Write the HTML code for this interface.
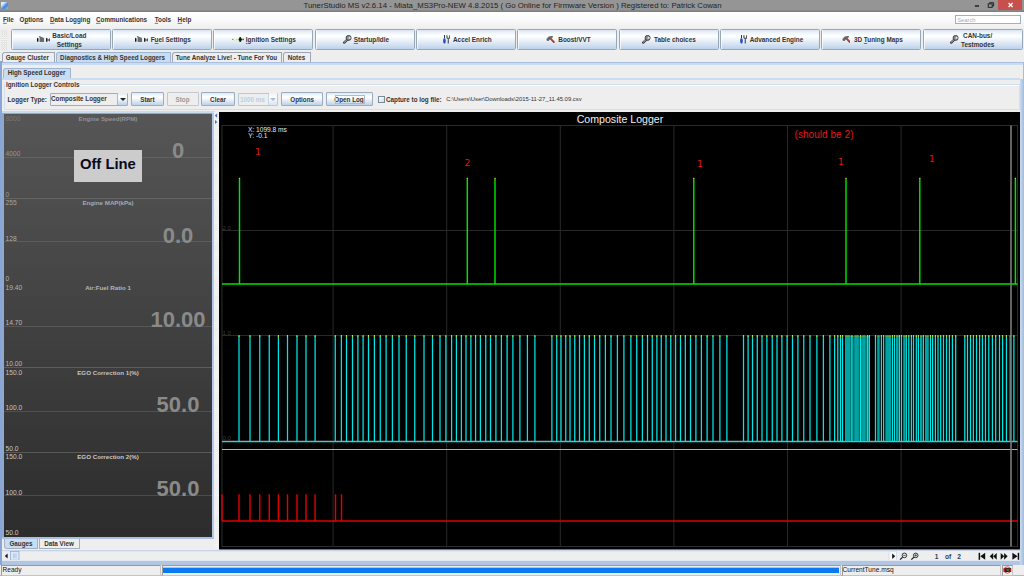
<!DOCTYPE html><html><head><meta charset="utf-8"><title>TunerStudio MS</title><style>
*{box-sizing:border-box;margin:0;padding:0}
html,body{width:1024px;height:576px;overflow:hidden;background:#eeeeee;font-family:"Liberation Sans",sans-serif;}
.a{position:absolute}
.t{position:absolute;white-space:nowrap;line-height:1;color:#333;font-weight:bold;font-size:6.4px;transform:translateY(-50%)}
.c{transform:translate(-50%,-50%)}
.btn{position:absolute;border:1px solid #9dacbf;border-radius:1px;background:linear-gradient(#dfe9f4 0%,#ffffff 32%,#f6f9fd 46%,#bdd2e9 100%);}
.tb{position:absolute;top:29px;height:21px;border:1px solid #97a7ba;border-radius:1.5px;background:linear-gradient(#d9e5f2 0%,#f0f5fb 16%,#ffffff 32%,#f2f7fc 46%,#bdd2e9 100%);box-shadow:inset 1px 0 0 rgba(255,255,255,0.7);}
.tab{position:absolute;border:1px solid #9aa6b4;border-bottom:none;border-radius:3px 0 0 0;background:#eeeeee}
.tab.sel{background:#c8ddf2;border-color:#9fb4cf}
u{text-decoration-thickness:0.6px;text-underline-offset:0.6px;text-decoration-color:rgba(40,40,40,0.6)}
</style></head><body>
<div class="a" style="left:0px;top:0px;width:1024px;height:12px;background:#959595;"></div>
<div class="a" style="left:0px;top:10.4px;width:1024px;height:1.8px;background:linear-gradient(#8c8c8c,#7c7c7c);"></div>
<div class="a" style="left:1.2px;top:2px;width:6.8px;height:7px;background:linear-gradient(135deg,#f4e8b0 0%,#dfeefc 25%,#3a86dc 60%,#9ab8d8 100%);"></div>
<div class="t c" style="left:512.5px;top:5.7px;font-size:7.78px;color:#242424;font-weight:normal;">TunerStudio MS v2.6.14 - Miata_MS3Pro-NEW 4.8.2015 ( Go Online for Firmware Version ) Registered to: Patrick Cowan</div>
<div class="a" style="left:998.4px;top:0px;width:23.7px;height:9.8px;background:#c7504c;"></div>
<svg class="a" style="left:970px;top:0" width="54" height="12" viewBox="970 0 54 12"><rect x="974.9" y="5.3" width="4.1" height="1.4" fill="#1a1a1a"/><rect x="988.2" y="3.9" width="4" height="3.4" fill="none" stroke="#1a1a1a" stroke-width="0.9"/><path d="M989.6 3.6 V2.7 H993.6 V6 H992.6" fill="none" stroke="#1a1a1a" stroke-width="0.9"/><path d="M1008.6 3 L1012.6 7 M1012.6 3 L1008.6 7" stroke="#fff" stroke-width="1.3"/></svg>
<div class="a" style="left:0px;top:12px;width:1024px;height:16px;background:linear-gradient(#ffffff 10%,#fafafa 50%,#efefef);"></div>
<div class="t" style="left:3px;top:20px;font-size:6.3px;color:#333;font-weight:bold;"><u>F</u>ile</div>
<div class="t" style="left:19.5px;top:20px;font-size:6.3px;color:#333;font-weight:bold;">O<u>p</u>tions</div>
<div class="t" style="left:50px;top:20px;font-size:6.3px;color:#333;font-weight:bold;"><u>D</u>ata Logging</div>
<div class="t" style="left:96px;top:20px;font-size:6.3px;color:#333;font-weight:bold;"><u>C</u>ommunications</div>
<div class="t" style="left:154.7px;top:20px;font-size:6.3px;color:#333;font-weight:bold;"><u>T</u>ools</div>
<div class="t" style="left:177.6px;top:20px;font-size:6.3px;color:#333;font-weight:bold;"><u>H</u>elp</div>
<div class="a" style="left:955.2px;top:15.2px;width:65.4px;height:9.3px;background:#ffffff;border:1px solid #9fb0c4"></div>
<div class="t" style="left:957.2px;top:20.7px;font-size:5.8px;color:#aaa;font-weight:normal;">Search</div>
<div class="a" style="left:0px;top:28px;width:1024px;height:24px;background:#eeeeee;"></div>
<div class="tb" style="left:10.5px;width:100.2px;display:flex;align-items:center;justify-content:center;gap:2.3px;padding:2px 0.0px 0 1.9px"><svg width="13.3" height="6.2" viewBox="0 0 13.3 6.2" style="margin-top:-2.6px"><ellipse cx="0.75" cy="3.9" rx="0.75" ry="2.1" fill="#000"/><polygon points="2.6,6 2.6,1.5 1.6,0.7 2.3,0 7.05,2.1 7.05,6" fill="#6c6c6c"/><ellipse cx="9.8" cy="3.9" rx="0.75" ry="2.1" fill="#000"/><polygon points="10.6,3.9 13.2,1.9 13.2,6" fill="#5a5a5a"/></svg><span style="font-size:6.4px;font-weight:bold;color:#333;text-align:center;line-height:8.6px;white-space:nowrap">Basic/Load<br>Settings</span></div>
<div class="tb" style="left:112.0px;width:100.2px;display:flex;align-items:center;justify-content:center;gap:2.3px;padding:2px 0.0px 0 1.7px"><svg width="13.3" height="6.2" viewBox="0 0 13.3 6.2" style="margin-top:-2.6px"><ellipse cx="0.75" cy="3.9" rx="0.75" ry="2.1" fill="#000"/><polygon points="2.6,6 2.6,1.5 1.6,0.7 2.3,0 7.05,2.1 7.05,6" fill="#6c6c6c"/><ellipse cx="9.8" cy="3.9" rx="0.75" ry="2.1" fill="#000"/><polygon points="10.6,3.9 13.2,1.9 13.2,6" fill="#5a5a5a"/></svg><span style="font-size:6.4px;font-weight:bold;color:#333;text-align:center;line-height:8.6px;white-space:nowrap">F<u>u</u>el Settings</span></div>
<div class="tb" style="left:213.3px;width:100.2px;display:flex;align-items:center;justify-content:center;gap:1.5px;padding:2px 0.0px 0 0.9px"><svg width="12.5" height="5" viewBox="0 0 12.5 5" style="margin-top:-2px"><circle cx="0.7" cy="2.4" r="0.6" fill="#a87010"/><path d="M2.6 1.2 L1.3 2.4 L2.6 3.6" stroke="#8ee88e" stroke-width="0.8" fill="none"/><circle cx="4.9" cy="2.5" r="0.9" fill="#e6e048"/><polygon points="6.6,2.5 7.8,0 8.7,0 9.2,1.5 10.2,2 10.2,3 9.2,3.5 8.7,5 7.8,5" fill="#0a1a0a" stroke="#0a6a0a" stroke-width="0.3"/><circle cx="11.3" cy="2.4" r="0.95" fill="#00a000"/></svg><span style="font-size:6.4px;font-weight:bold;color:#333;text-align:center;line-height:8.6px;white-space:nowrap"><u>I</u>gnition Settings</span></div>
<div class="tb" style="left:315.0px;width:100.2px;display:flex;align-items:center;justify-content:center;gap:2.3px;padding:2px 0.0px 0 1.3px"><svg width="9" height="8.6" viewBox="0 0 9 8.6" style="margin-top:-2px"><line x1="4.3" y1="4.6" x2="1.2" y2="7.6" stroke="#3c3c3c" stroke-width="2.3" stroke-linecap="round"/><line x1="3.9" y1="4.7" x2="1.2" y2="7.3" stroke="#f0f0f0" stroke-width="0.8"/><circle cx="5.6" cy="2.9" r="2.5" fill="#8a8a8a" stroke="#444" stroke-width="1"/><polygon points="5.2,2.2 8.8,-0.5 9,4.2 6.2,3.8" fill="#eef3f9" opacity="0.0"/><polygon points="5.3,3.2 6.6,1.6 7.6,2.6 7.2,4" fill="#f0f0f0"/></svg><span style="font-size:6.4px;font-weight:bold;color:#333;text-align:center;line-height:8.6px;white-space:nowrap"><u>S</u>tartup/Idle</span></div>
<div class="tb" style="left:416.0px;width:100.2px;display:flex;align-items:center;justify-content:center;gap:3px;padding:2px 0.0px 0 2.5px"><svg width="7" height="8.8" viewBox="0 0 7 8.8" style="margin-top:-2.4px"><rect x="1" y="0" width="0.9" height="3" fill="#222"/><ellipse cx="1.45" cy="5.8" rx="1.4" ry="2.9" fill="#2c50c4"/><path d="M3.9 0.2 V2 Q3.9 3.5 5.3 3.5 Q6.7 3.5 6.7 2 V0.2 M5.3 3.3 V8.5" stroke="#5c5c68" stroke-width="1.3" fill="none"/></svg><span style="font-size:6.4px;font-weight:bold;color:#333;text-align:center;line-height:8.6px;white-space:nowrap">Accel Enrich</span></div>
<div class="tb" style="left:517.2px;width:100.2px;display:flex;align-items:center;justify-content:center;gap:3.5px;padding:2px 0.0px 0 2.1px"><svg width="8.8" height="7" viewBox="0 0 8.8 7" style="margin-top:-3px"><line x1="4.6" y1="2.6" x2="7.9" y2="6.1" stroke="#b23c22" stroke-width="1.9" stroke-linecap="round"/><polygon points="0.4,3 2.8,0.6 6.6,-0.2 7.1,1.2 4.8,2.2 2.6,5 0.8,4.8" fill="#666"/></svg><span style="font-size:6.4px;font-weight:bold;color:#333;text-align:center;line-height:8.6px;white-space:nowrap">Boost/VVT</span></div>
<div class="tb" style="left:618.8px;width:100.2px;display:flex;align-items:center;justify-content:center;gap:2.5px;padding:2px 0.0px 0 0.5px"><svg width="9" height="8.6" viewBox="0 0 9 8.6" style="margin-top:-2px"><line x1="4.3" y1="4.6" x2="1.2" y2="7.6" stroke="#3c3c3c" stroke-width="2.3" stroke-linecap="round"/><line x1="3.9" y1="4.7" x2="1.2" y2="7.3" stroke="#f0f0f0" stroke-width="0.8"/><circle cx="5.6" cy="2.9" r="2.5" fill="#8a8a8a" stroke="#444" stroke-width="1"/><polygon points="5.2,2.2 8.8,-0.5 9,4.2 6.2,3.8" fill="#eef3f9" opacity="0.0"/><polygon points="5.3,3.2 6.6,1.6 7.6,2.6 7.2,4" fill="#f0f0f0"/></svg><span style="font-size:6.4px;font-weight:bold;color:#333;text-align:center;line-height:8.6px;white-space:nowrap">Table choices</span></div>
<div class="tb" style="left:720.1px;width:100.2px;display:flex;align-items:center;justify-content:center;gap:3px;padding:2px 0.0px 0 2.5px"><svg width="7" height="8.8" viewBox="0 0 7 8.8" style="margin-top:-2.4px"><rect x="1" y="0" width="0.9" height="3" fill="#222"/><ellipse cx="1.45" cy="5.8" rx="1.4" ry="2.9" fill="#2c50c4"/><path d="M3.9 0.2 V2 Q3.9 3.5 5.3 3.5 Q6.7 3.5 6.7 2 V0.2 M5.3 3.3 V8.5" stroke="#5c5c68" stroke-width="1.3" fill="none"/></svg><span style="font-size:6.4px;font-weight:bold;color:#333;text-align:center;line-height:8.6px;white-space:nowrap">Advanced Engine</span></div>
<div class="tb" style="left:821.3px;width:100.2px;display:flex;align-items:center;justify-content:center;gap:3.4px;padding:2px 0.0px 0 1.7px"><svg width="8.8" height="7" viewBox="0 0 8.8 7" style="margin-top:-3px"><line x1="4.6" y1="2.6" x2="7.9" y2="6.1" stroke="#b23c22" stroke-width="1.9" stroke-linecap="round"/><polygon points="0.4,3 2.8,0.6 6.6,-0.2 7.1,1.2 4.8,2.2 2.6,5 0.8,4.8" fill="#666"/></svg><span style="font-size:6.4px;font-weight:bold;color:#333;text-align:center;line-height:8.6px;white-space:nowrap">3D <u>T</u>uning Maps</span></div>
<div class="tb" style="left:922.8px;width:100.2px;display:flex;align-items:center;justify-content:center;gap:2px;padding:2px 1.5px 0 0.0px"><svg width="9" height="8.6" viewBox="0 0 9 8.6" style="margin-top:-2px"><line x1="4.3" y1="4.6" x2="1.2" y2="7.6" stroke="#3c3c3c" stroke-width="2.3" stroke-linecap="round"/><line x1="3.9" y1="4.7" x2="1.2" y2="7.3" stroke="#f0f0f0" stroke-width="0.8"/><circle cx="5.6" cy="2.9" r="2.5" fill="#8a8a8a" stroke="#444" stroke-width="1"/><polygon points="5.2,2.2 8.8,-0.5 9,4.2 6.2,3.8" fill="#eef3f9" opacity="0.0"/><polygon points="5.3,3.2 6.6,1.6 7.6,2.6 7.2,4" fill="#f0f0f0"/></svg><span style="font-size:6.4px;font-weight:bold;color:#333;text-align:center;line-height:8.6px;white-space:nowrap">CAN-bus/<br>Testmodes</span></div>
<div class="a" style="left:0.8px;top:29.5px;width:6.4px;height:20px;background:repeating-conic-gradient(#dadada 0% 25%, #f4f4f4 0% 50%) 0 0/2.13px 2.13px;"></div>
<div class="a" style="left:0px;top:61.5px;width:1024px;height:3.5px;background:#c8ddf2;"></div>
<div class="a" style="left:0px;top:61.8px;width:1022.5px;height:0.8px;background:#aabfe0;"></div>
<div class="a" style="left:0px;top:61px;width:2px;height:515px;background:#c8ddf2;"></div>
<div class="tab" style="left:2px;top:52px;width:53.2px;height:9.5px"></div>
<div class="t c" style="left:27.4px;top:57.5px;font-size:6.3px;color:#333;font-weight:bold;">Gauge Cluster</div>
<div class="tab sel" style="left:56px;top:52px;width:115.2px;height:9.5px"></div>
<div class="t c" style="left:112.6px;top:57.5px;font-size:6.3px;color:#333;font-weight:bold;">Diagnostics &amp; High Speed Loggers</div>
<div class="tab" style="left:171.5px;top:52px;width:110.4px;height:9.5px"></div>
<div class="t c" style="left:226.4px;top:57.5px;font-size:6.3px;color:#333;font-weight:bold;">Tune Analyze Live! - Tune For You</div>
<div class="tab" style="left:282.7px;top:52px;width:28.2px;height:9.5px"></div>
<div class="t c" style="left:296.4px;top:57.5px;font-size:6.3px;color:#333;font-weight:bold;">Notes</div>
<div class="tab sel" style="left:2.5px;top:67.5px;width:68px;height:11px"></div>
<div class="t c" style="left:36.5px;top:73px;font-size:6.3px;color:#333;font-weight:bold;">High Speed Logger</div>
<div class="a" style="left:2px;top:78px;width:1018px;height:2px;background:#c8ddf2;"></div>
<div class="a" style="left:4px;top:84px;width:1016px;height:1px;background:#d2dfee;"></div>
<div class="a" style="left:5px;top:85px;width:1014px;height:1px;background:#fafcfe;"></div>
<div class="a" style="left:5px;top:81px;width:74px;height:6.4px;background:#eeeeee;"></div>
<div class="t" style="left:6px;top:84.5px;font-size:6.3px;color:#333;font-weight:bold;">Ignition Logger Controls</div>
<div class="a" style="left:4px;top:84px;width:1px;height:26px;background:#d2dfee;"></div>
<div class="a" style="left:1019px;top:84px;width:1px;height:26px;background:#d2dfee;"></div>
<div class="a" style="left:4px;top:109px;width:1016px;height:1px;background:#d2dfee;"></div>
<div class="t" style="left:7.5px;top:99.5px;font-size:6.3px;color:#333;font-weight:bold;">Logger Type:</div>
<div class="btn" style="left:49.5px;top:92.5px;width:78px;height:13px;background:#eeeeee"></div>
<div class="a" style="left:117.5px;top:93.3px;width:9.3px;height:11.4px;background:linear-gradient(#dfe9f4 0%,#ffffff 32%,#f6f9fd 46%,#bdd2e9 100%)"></div>
<div class="t" style="left:51px;top:99px;font-size:6.3px;color:#333;font-weight:bold;">Composite Logger</div>
<div class="a" style="left:117px;top:93.3px;width:0.8px;height:11.5px;background:#a9b8ca"></div>
<div class="a" style="left:119.6px;top:98.2px;width:0;height:0;border-left:3px solid transparent;border-right:3px solid transparent;border-top:3.2px solid #222"></div>
<div class="btn" style="left:131px;top:92.4px;width:33px;height:13.3px"></div>
<div class="t c" style="left:147.5px;top:99.5px;font-size:6.3px;color:#333;font-weight:bold;">Start</div>
<div class="btn" style="left:166.5px;top:92.4px;width:32px;height:13.3px;background:#eeeeee;border-color:#c2c8d0"></div>
<div class="t c" style="left:182.5px;top:99.5px;font-size:6.3px;color:#999;font-weight:bold;">Stop</div>
<div class="btn" style="left:201px;top:92.4px;width:34px;height:13.3px"></div>
<div class="t c" style="left:218.0px;top:99.5px;font-size:6.3px;color:#333;font-weight:bold;">Clear</div>
<div class="btn" style="left:238.3px;top:92.5px;width:39.5px;height:13px;border-color:#bcc8d6;background:#eeeeee"></div>
<div class="a" style="left:268.5px;top:93.3px;width:8.5px;height:11.4px;background:linear-gradient(#eaf1f8 0%,#ffffff 35%,#d6e4f3 100%)"></div>
<div class="t" style="left:240px;top:99.5px;font-size:6.3px;color:#b8cfe5;font-weight:bold;">1000 ms</div>
<div class="a" style="left:268px;top:93.5px;width:1px;height:11.5px;background:#c8d5e2"></div>
<div class="a" style="left:270.4px;top:98.2px;width:0;height:0;border-left:3px solid transparent;border-right:3px solid transparent;border-top:3.2px solid #a8bcd4"></div>
<div class="btn" style="left:281.3px;top:92.4px;width:41.7px;height:13.3px"></div>
<div class="t c" style="left:302.15000000000003px;top:99.5px;font-size:6.3px;color:#333;font-weight:bold;">Options</div>
<div class="btn" style="left:325.5px;top:92.4px;width:47px;height:13.3px"></div>
<div class="t c" style="left:349.0px;top:99.5px;font-size:6.3px;color:#333;font-weight:bold;">Open <u>L</u>og</div>
<div class="a" style="left:334.5px;top:94.6px;width:30px;height:9.4px;background:transparent;border:0.8px solid #aebcd2"></div>
<div class="a" style="left:377.5px;top:96px;width:7px;height:7px;border:1px solid #7a8a99;background:linear-gradient(135deg,#fff,#c8ddf2)"></div>
<div class="t" style="left:386px;top:99.5px;font-size:6.3px;color:#333;font-weight:bold;">Capture to log file:</div>
<div class="t" style="left:446.3px;top:100px;font-size:5.9px;color:#333;font-weight:normal;">C:\Users\User\Downloads\2015-11-27_11.45.09.csv</div>
<div class="a" style="left:2px;top:111px;width:213px;height:2px;background:#c8ddf2;"></div>
<div class="a" style="left:2px;top:112.5px;width:212.5px;height:1.7px;background:#8fa8cc;"></div>
<div class="a" style="left:2.2px;top:112.5px;width:1.8px;height:426px;background:#8fa8cc;"></div>
<div class="a" style="left:4px;top:114.25px;width:208px;height:423px;background:linear-gradient(#565656,#2c2c2c);"></div>
<div class="a" style="left:211.7px;top:113px;width:2.2px;height:425.5px;background:#b4c8e8;"></div>
<div class="a" style="left:2.2px;top:537.1px;width:211.7px;height:1.6px;background:#a9c0e4;"></div>
<div class="a" style="left:4px;top:156.85px;width:208px;height:1px;background:rgba(140,140,140,0.3);"></div>
<div class="t" style="left:5.5px;top:118.85px;font-size:6.7px;color:#787878;font-weight:normal;">8000</div>
<div class="t" style="left:5.5px;top:154.15px;font-size:6.7px;color:#969696;font-weight:normal;">4000</div>
<div class="t" style="left:5.5px;top:194.85px;font-size:6.7px;color:#969696;font-weight:normal;">0</div>
<div class="t c" style="left:108px;top:118.75px;font-size:6.2px;color:#929292;font-weight:bold;">Engine Speed(RPM)</div>
<div class="t c" style="left:178px;top:151.05px;font-size:22px;color:#8a8a8a;font-weight:bold;">0</div>
<div class="a" style="left:4px;top:198.35px;width:208px;height:1px;background:rgba(120,120,120,0.55);"></div>
<div class="a" style="left:4px;top:241.45px;width:208px;height:1px;background:rgba(140,140,140,0.3);"></div>
<div class="t" style="left:5.5px;top:203.45px;font-size:6.7px;color:#a4a4a4;font-weight:normal;">255</div>
<div class="t" style="left:5.5px;top:238.75px;font-size:6.7px;color:#aeaeae;font-weight:normal;">128</div>
<div class="t" style="left:5.5px;top:279.45px;font-size:6.7px;color:#aeaeae;font-weight:normal;">0</div>
<div class="t c" style="left:108px;top:203.35px;font-size:6.2px;color:#aaaaaa;font-weight:bold;">Engine MAP(kPa)</div>
<div class="t c" style="left:178px;top:235.64999999999998px;font-size:22px;color:#8a8a8a;font-weight:bold;">0.0</div>
<div class="a" style="left:4px;top:326.05px;width:208px;height:1px;background:rgba(140,140,140,0.3);"></div>
<div class="t" style="left:5.5px;top:288.05px;font-size:6.7px;color:#b2b2b2;font-weight:normal;">19.40</div>
<div class="t" style="left:5.5px;top:323.34999999999997px;font-size:6.7px;color:#bababa;font-weight:normal;">14.70</div>
<div class="t" style="left:5.5px;top:364.04999999999995px;font-size:6.7px;color:#bababa;font-weight:normal;">10.00</div>
<div class="t c" style="left:108px;top:287.95px;font-size:6.2px;color:#b6b6b6;font-weight:bold;">Air:Fuel Ratio 1</div>
<div class="t c" style="left:178px;top:320.25px;font-size:22px;color:#8a8a8a;font-weight:bold;">10.00</div>
<div class="a" style="left:4px;top:367.04999999999995px;width:208px;height:1px;background:rgba(120,120,120,0.55);"></div>
<div class="a" style="left:4px;top:410.65px;width:208px;height:1px;background:rgba(140,140,140,0.3);"></div>
<div class="t" style="left:5.5px;top:372.65px;font-size:6.7px;color:#c2c2c2;font-weight:normal;">150.0</div>
<div class="t" style="left:5.5px;top:407.94999999999993px;font-size:6.7px;color:#c6c6c6;font-weight:normal;">100.0</div>
<div class="t" style="left:5.5px;top:448.65px;font-size:6.7px;color:#c6c6c6;font-weight:normal;">50.0</div>
<div class="t c" style="left:108px;top:372.54999999999995px;font-size:6.2px;color:#c4c4c4;font-weight:bold;">EGO Correction 1(%)</div>
<div class="t c" style="left:178px;top:404.84999999999997px;font-size:22px;color:#8a8a8a;font-weight:bold;">50.0</div>
<div class="a" style="left:4px;top:452.15px;width:208px;height:1px;background:rgba(120,120,120,0.55);"></div>
<div class="a" style="left:4px;top:495.25px;width:208px;height:1px;background:rgba(140,140,140,0.3);"></div>
<div class="t" style="left:5.5px;top:457.25px;font-size:6.7px;color:#c6c6c6;font-weight:normal;">150.0</div>
<div class="t" style="left:5.5px;top:492.54999999999995px;font-size:6.7px;color:#cacaca;font-weight:normal;">100.0</div>
<div class="t" style="left:5.5px;top:533.25px;font-size:6.7px;color:#cacaca;font-weight:normal;">50.0</div>
<div class="t c" style="left:108px;top:457.15px;font-size:6.2px;color:#c8c8c8;font-weight:bold;">EGO Correction 2(%)</div>
<div class="t c" style="left:178px;top:489.45px;font-size:22px;color:#8a8a8a;font-weight:bold;">50.0</div>
<div class="a" style="left:74px;top:149.5px;width:67.5px;height:32.5px;background:#cccccc;"></div>
<div class="t c" style="left:107.9px;top:164.2px;font-size:14.8px;color:#0a0a20;font-weight:bold;">Off Line</div>
<div class="a" style="left:4px;top:538.5px;width:34px;height:10px;background:#c8ddf2;border:1px solid #a4b0be;border-top:none;border-radius:0 0 0 3px"></div>
<div class="t c" style="left:21px;top:543.7px;font-size:6.3px;color:#333;font-weight:bold;">Gauges</div>
<div class="a" style="left:38.5px;top:538.5px;width:41px;height:10px;background:#eeeeee;border:1px solid #a4b0be;border-top:none;"></div>
<div class="t c" style="left:59px;top:543.7px;font-size:6.3px;color:#333;font-weight:bold;">Data View</div>
<div class="a" style="left:214px;top:111.5px;width:5px;height:438px;background:repeating-conic-gradient(#e8e8e8 0% 25%, #f6f6f6 0% 50%) 0 0/2.13px 2.13px;"></div>
<svg class="a" style="left:213px;top:112px" width="7" height="14" viewBox="213 112 7 14"><polygon points="214.8,115.6 217.1,113.5 217.1,117.7" fill="#4a6ec0"/><polygon points="217.3,122 215,119.9 215,124.1" fill="#4a6ec0"/></svg>
<svg class="a" style="left:0;top:0" width="1024" height="576" viewBox="0 0 1024 576" font-family="Liberation Sans, sans-serif">
<rect x="219" y="112" width="801" height="437.5" fill="#000"/>
<line x1="333.10" y1="125.5" x2="333.10" y2="546.5" stroke="#292929" stroke-width="1"/>
<line x1="446.70" y1="125.5" x2="446.70" y2="546.5" stroke="#292929" stroke-width="1"/>
<line x1="560.30" y1="125.5" x2="560.30" y2="546.5" stroke="#292929" stroke-width="1"/>
<line x1="673.90" y1="125.5" x2="673.90" y2="546.5" stroke="#292929" stroke-width="1"/>
<line x1="787.50" y1="125.5" x2="787.50" y2="546.5" stroke="#292929" stroke-width="1"/>
<line x1="901.10" y1="125.5" x2="901.10" y2="546.5" stroke="#292929" stroke-width="1"/>
<line x1="222" y1="230.50" x2="1017.5" y2="230.50" stroke="#292929" stroke-width="1"/>
<line x1="222" y1="335.50" x2="1017.5" y2="335.50" stroke="#292929" stroke-width="1"/>
<line x1="222" y1="440.50" x2="1017.5" y2="440.50" stroke="#292929" stroke-width="1"/>
<rect x="222" y="125.5" width="795.5" height="421.0" fill="none" stroke="#2c2c2c" stroke-width="1"/>
<text x="620" y="123" fill="#f0f0f0" font-size="10.6" text-anchor="middle">Composite Logger</text>
<text x="248" y="131.9" fill="#e8e8e8" font-size="6.6">X: 1099.8 ms</text>
<text x="248.3" y="138.1" fill="#e8e8e8" font-size="6.6">Y: -0.1</text>
<text x="222.5" y="229.5" fill="#3a3a3a" font-size="6">2.0</text>
<text x="222.5" y="334.5" fill="#3a3a3a" font-size="6">1.0</text>
<text x="222.5" y="440" fill="#3a3a3a" font-size="6">0.0</text>
<path d="M222 283.9 H1017.5 M239.5 283.9 V178.5 M467.3 283.9 V178.5 M495 283.9 V178.5 M693.8 283.9 V178.5 M846 283.9 V178.5 M919.8 283.9 V178.5 M1015.4 283.9 V178.5" stroke="#00e400" stroke-width="1.45" fill="none"/>
<rect x="238.9" y="177.8" width="1.2" height="1.2" fill="#e8d000"/>
<rect x="466.7" y="177.8" width="1.2" height="1.2" fill="#e8d000"/>
<rect x="494.4" y="177.8" width="1.2" height="1.2" fill="#e8d000"/>
<rect x="693.1999999999999" y="177.8" width="1.2" height="1.2" fill="#e8d000"/>
<rect x="845.4" y="177.8" width="1.2" height="1.2" fill="#e8d000"/>
<rect x="919.1999999999999" y="177.8" width="1.2" height="1.2" fill="#e8d000"/>
<rect x="1014.8" y="177.8" width="1.2" height="1.2" fill="#e8d000"/>
<rect x="845" y="336" width="24.8" height="105.5" fill="#006a6a"/>
<rect x="845" y="336" width="5.30" height="105.5" fill="#00a2a2"/>
<rect x="845" y="335.3" width="5.30" height="1.2" fill="#b0a000"/>
<rect x="854.4" y="336" width="4.35" height="105.5" fill="#00a2a2"/>
<rect x="854.4" y="335.3" width="4.35" height="1.2" fill="#b0a000"/>
<rect x="862.2" y="336" width="3.40" height="105.5" fill="#00a2a2"/>
<rect x="862.2" y="335.3" width="3.40" height="1.2" fill="#b0a000"/>
<rect x="877.2" y="336" width="2.50" height="105.5" fill="#00a2a2"/>
<rect x="877.2" y="335.3" width="2.50" height="1.2" fill="#b0a000"/>
<rect x="885.3" y="336" width="5.70" height="105.5" fill="#00a2a2"/>
<rect x="885.3" y="335.3" width="5.70" height="1.2" fill="#b0a000"/>
<rect x="896" y="336" width="2.50" height="105.5" fill="#00a2a2"/>
<rect x="896" y="335.3" width="2.50" height="1.2" fill="#b0a000"/>
<rect x="903.2" y="336" width="2.20" height="105.5" fill="#00a2a2"/>
<rect x="903.2" y="335.3" width="2.20" height="1.2" fill="#b0a000"/>
<rect x="920" y="336" width="2.25" height="105.5" fill="#00a2a2"/>
<rect x="920" y="335.3" width="2.25" height="1.2" fill="#b0a000"/>
<rect x="925" y="336" width="3.80" height="105.5" fill="#00a2a2"/>
<rect x="925" y="335.3" width="3.80" height="1.2" fill="#b0a000"/>
<path d="M222 441.5 H1017.5 M239 441.5 V336 M250 441.5 V336 M259.75 441.5 V336 M269.25 441.5 V336 M278.4 441.5 V336 M287.5 441.5 V336 M297 441.5 V336 M306 441.5 V336 M315.1 441.5 V336 M335.25 441.5 V336 M341.4 441.5 V336 M346.5 441.5 V336 M352.5 441.5 V336 M357.9 441.5 V336 M363.1 441.5 V336 M368.5 441.5 V336 M374.4 441.5 V336 M380.25 441.5 V336 M386.1 441.5 V336 M392.4 441.5 V336 M399 441.5 V336 M406.25 441.5 V336 M414.75 441.5 V336 M424 441.5 V336 M432.5 441.5 V336 M440 441.5 V336 M445.9 441.5 V336 M451.6 441.5 V336 M456.4 441.5 V336 M461.4 441.5 V336 M466 441.5 V336 M470.9 441.5 V336 M475.6 441.5 V336 M480.4 441.5 V336 M485.75 441.5 V336 M490.5 441.5 V336 M495.9 441.5 V336 M501.4 441.5 V336 M507.1 441.5 V336 M512.9 441.5 V336 M519.9 441.5 V336 M527.4 441.5 V336 M534.9 441.5 V336 M551.9 441.5 V336 M556.75 441.5 V336 M561 441.5 V336 M565.75 441.5 V336 M570 441.5 V336 M574.75 441.5 V336 M579.5 441.5 V336 M584.4 441.5 V336 M589.25 441.5 V336 M594.5 441.5 V336 M599.75 441.5 V336 M605.4 441.5 V336 M611 441.5 V336 M617.4 441.5 V336 M623.9 441.5 V336 M630.9 441.5 V336 M636.75 441.5 V336 M642.4 441.5 V336 M647.5 441.5 V336 M652.25 441.5 V336 M656.9 441.5 V336 M661.25 441.5 V336 M666 441.5 V336 M670.75 441.5 V336 M675.6 441.5 V336 M680.5 441.5 V336 M685.35 441.5 V336 M690.5 441.5 V336 M695.9 441.5 V336 M701.4 441.5 V336 M707.1 441.5 V336 M713 441.5 V336 M719.9 441.5 V336 M726.9 441.5 V336 M743.5 441.5 V336 M748.1 441.5 V336 M752.5 441.5 V336 M757.25 441.5 V336 M762 441.5 V336 M766.9 441.5 V336 M772.25 441.5 V336 M777 441.5 V336 M781.9 441.5 V336 M787.1 441.5 V336 M792.5 441.5 V336 M797.9 441.5 V336 M803.75 441.5 V336 M810 441.5 V336 M816.9 441.5 V336 M823.4 441.5 V336 M829.9 441.5 V336 M834.6 441.5 V336 M837.8 441.5 V336 M840.5 441.5 V336 M842.5 441.5 V336 M851.9 441.5 V336 M860.6 441.5 V336 M867.5 441.5 V336 M869.4 441.5 V336 M875.5 441.5 V336 M881.4 441.5 V336 M883.6 441.5 V336 M892.4 441.5 V336 M894.5 441.5 V336 M899.4 441.5 V336 M901.5 441.5 V336 M906.3 441.5 V336 M908.8 441.5 V336 M911.4 441.5 V336 M913.5 441.5 V336 M916.3 441.5 V336 M918.4 441.5 V336 M923.4 441.5 V336 M930.5 441.5 V336 M932.6 441.5 V336 M935.4 441.5 V336 M938 441.5 V336 M940.7 441.5 V336 M943.5 441.5 V336 M946.5 441.5 V336 M949.4 441.5 V336 M952.4 441.5 V336 M955.7 441.5 V336 M964.8 441.5 V336 M967.5 441.5 V336 M970.5 441.5 V336 M973.4 441.5 V336 M976.5 441.5 V336 M979.6 441.5 V336 M982.4 441.5 V336 M985.5 441.5 V336 M988.8 441.5 V336 M992.4 441.5 V336 M995.7 441.5 V336 M999.5 441.5 V336 M1002.6 441.5 V336 M1006.4 441.5 V336 M1010.2 441.5 V336 M1013.9 441.5 V336" stroke="#00e6e6" stroke-width="1.25" fill="none"/>
<path d="M238.45 335.9h1.1M249.45 335.9h1.1M259.2 335.9h1.1M268.7 335.9h1.1M277.84999999999997 335.9h1.1M286.95 335.9h1.1M296.45 335.9h1.1M305.45 335.9h1.1M314.55 335.9h1.1M334.7 335.9h1.1M340.84999999999997 335.9h1.1M345.95 335.9h1.1M351.95 335.9h1.1M357.34999999999997 335.9h1.1M362.55 335.9h1.1M367.95 335.9h1.1M373.84999999999997 335.9h1.1M379.7 335.9h1.1M385.55 335.9h1.1M391.84999999999997 335.9h1.1M398.45 335.9h1.1M405.7 335.9h1.1M414.2 335.9h1.1M423.45 335.9h1.1M431.95 335.9h1.1M439.45 335.9h1.1M445.34999999999997 335.9h1.1M451.05 335.9h1.1M455.84999999999997 335.9h1.1M460.84999999999997 335.9h1.1M465.45 335.9h1.1M470.34999999999997 335.9h1.1M475.05 335.9h1.1M479.84999999999997 335.9h1.1M485.2 335.9h1.1M489.95 335.9h1.1M495.34999999999997 335.9h1.1M500.84999999999997 335.9h1.1M506.55 335.9h1.1M512.35 335.9h1.1M519.35 335.9h1.1M526.85 335.9h1.1M534.35 335.9h1.1M551.35 335.9h1.1M556.2 335.9h1.1M560.45 335.9h1.1M565.2 335.9h1.1M569.45 335.9h1.1M574.2 335.9h1.1M578.95 335.9h1.1M583.85 335.9h1.1M588.7 335.9h1.1M593.95 335.9h1.1M599.2 335.9h1.1M604.85 335.9h1.1M610.45 335.9h1.1M616.85 335.9h1.1M623.35 335.9h1.1M630.35 335.9h1.1M636.2 335.9h1.1M641.85 335.9h1.1M646.95 335.9h1.1M651.7 335.9h1.1M656.35 335.9h1.1M660.7 335.9h1.1M665.45 335.9h1.1M670.2 335.9h1.1M675.0500000000001 335.9h1.1M679.95 335.9h1.1M684.8000000000001 335.9h1.1M689.95 335.9h1.1M695.35 335.9h1.1M700.85 335.9h1.1M706.5500000000001 335.9h1.1M712.45 335.9h1.1M719.35 335.9h1.1M726.35 335.9h1.1M742.95 335.9h1.1M747.5500000000001 335.9h1.1M751.95 335.9h1.1M756.7 335.9h1.1M761.45 335.9h1.1M766.35 335.9h1.1M771.7 335.9h1.1M776.45 335.9h1.1M781.35 335.9h1.1M786.5500000000001 335.9h1.1M791.95 335.9h1.1M797.35 335.9h1.1M803.2 335.9h1.1M809.45 335.9h1.1M816.35 335.9h1.1M822.85 335.9h1.1M829.35 335.9h1.1M834.0500000000001 335.9h1.1M837.25 335.9h1.1M839.95 335.9h1.1M841.95 335.9h1.1M851.35 335.9h1.1M860.0500000000001 335.9h1.1M866.95 335.9h1.1M868.85 335.9h1.1M874.95 335.9h1.1M880.85 335.9h1.1M883.0500000000001 335.9h1.1M891.85 335.9h1.1M893.95 335.9h1.1M898.85 335.9h1.1M900.95 335.9h1.1M905.75 335.9h1.1M908.25 335.9h1.1M910.85 335.9h1.1M912.95 335.9h1.1M915.75 335.9h1.1M917.85 335.9h1.1M922.85 335.9h1.1M929.95 335.9h1.1M932.0500000000001 335.9h1.1M934.85 335.9h1.1M937.45 335.9h1.1M940.1500000000001 335.9h1.1M942.95 335.9h1.1M945.95 335.9h1.1M948.85 335.9h1.1M951.85 335.9h1.1M955.1500000000001 335.9h1.1M964.25 335.9h1.1M966.95 335.9h1.1M969.95 335.9h1.1M972.85 335.9h1.1M975.95 335.9h1.1M979.0500000000001 335.9h1.1M981.85 335.9h1.1M984.95 335.9h1.1M988.25 335.9h1.1M991.85 335.9h1.1M995.1500000000001 335.9h1.1M998.95 335.9h1.1M1002.0500000000001 335.9h1.1M1005.85 335.9h1.1M1009.6500000000001 335.9h1.1M1013.35 335.9h1.1" stroke="#f0dc00" stroke-width="1.6" fill="none"/>
<line x1="222" y1="449.5" x2="1017.5" y2="449.5" stroke="#b0b0b0" stroke-width="1"/>
<path d="M222 521 H1017.5 M222 521 V494.3 M239 521 V494.3 M250 521 V494.3 M259.75 521 V494.3 M269.25 521 V494.3 M278.4 521 V494.3 M287.5 521 V494.3 M297 521 V494.3 M306 521 V494.3 M315.1 521 V494.3 M335.5 521 V494.3 M341.5 521 V494.3" stroke="#e00000" stroke-width="1.45" fill="none"/>
<rect x="1010.2" y="125.5" width="1.6" height="421.0" fill="#7a7a7a"/>
<text x="255" y="154.5" fill="#e01818" font-size="9.2" font-family="DejaVu Sans, sans-serif">1</text>
<text x="464.5" y="166" fill="#e01818" font-size="9.2" font-family="DejaVu Sans, sans-serif">2</text>
<text x="697" y="166.5" fill="#e01818" font-size="9.2" font-family="DejaVu Sans, sans-serif">1</text>
<text x="838" y="165.3" fill="#e01818" font-size="9.2" font-family="DejaVu Sans, sans-serif">1</text>
<text x="929" y="162" fill="#e01818" font-size="9.2" font-family="DejaVu Sans, sans-serif">1</text>
<text x="794.6" y="137.8" fill="#e01818" font-size="10.1">(should be 2)</text>
</svg>
<div class="a" style="left:2px;top:549.6px;width:1018.5px;height:1.5px;background:#c6d5e8;"></div>
<div class="a" style="left:3.5px;top:551px;width:885.5px;height:9.6px;background:#eeeeee;border:1px solid #dfe6ee;border-left:none;border-right:none"></div>
<svg class="a" style="left:0;top:548px" width="1024" height="28" viewBox="0 548 1024 28" font-family="Liberation Sans, sans-serif"><polygon points="4.8,556 7.6,553.4 7.6,558.6" fill="#111"/><rect x="10.5" y="551.4" width="8.5" height="8.8" fill="#dce8f5" stroke="#8fb0dc" stroke-width="0.8"/><path d="M13.5 553.5 V558.2 M14.8 553.5 V558.2 M16.1 553.5 V558.2" stroke="#9db8dc" stroke-width="0.6"/><rect x="889" y="551.2" width="7.5" height="9.2" fill="#f4f7fb" stroke="#c5d2e0" stroke-width="0.6"/><polygon points="895.2,556.3 892.2,553.6 892.2,559" fill="#111"/><circle cx="904.4" cy="555.4" r="2.3" fill="#eee" stroke="#222" stroke-width="0.9"/><line x1="902.6" y1="557.3" x2="900" y2="559.6" stroke="#222" stroke-width="1.2"/><line x1="903.2" y1="555.4" x2="905.6" y2="555.4" stroke="#222" stroke-width="0.7"/><circle cx="915.7" cy="555.4" r="2.3" fill="#eee" stroke="#222" stroke-width="0.9"/><line x1="913.9" y1="557.3" x2="911.3" y2="559.6" stroke="#222" stroke-width="1.2"/><path d="M914.5 555.4 H916.9 M915.7 554.2 V556.6" stroke="#222" stroke-width="0.7"/><g fill="#111"><rect x="978.6" y="552.8" width="1.5" height="7"/><polygon points="980.2,556.3 985.2,552.8 985.2,559.8"/><polygon points="989.7,556.3 993.2,552.9 993.2,559.7"/><polygon points="993.2,556.3 996.7,552.9 996.7,559.7"/><polygon points="1004.2,556.3 1000.7,552.9 1000.7,559.7"/><polygon points="1007.6,556.3 1004.1,552.9 1004.1,559.7"/><rect x="1017.7" y="552.8" width="1.5" height="7"/><polygon points="1017.6,556.3 1012.4,552.8 1012.4,559.8"/></g></svg>
<div class="t c" style="left:936.5px;top:556.5px;font-size:6.6px;color:#333a55;font-weight:bold;">1</div>
<div class="t c" style="left:948px;top:556.5px;font-size:6.6px;color:#333a55;font-weight:bold;">of</div>
<div class="t c" style="left:959.2px;top:556.5px;font-size:6.6px;color:#333a55;font-weight:bold;">2</div>
<div class="a" style="left:0px;top:560px;width:1024px;height:0.9px;background:#dfe8f3;"></div>
<div class="a" style="left:0px;top:560.9px;width:1024px;height:4.2px;background:#b3c6df;"></div>
<div class="a" style="left:0px;top:565px;width:1024px;height:11px;background:#eeeeee;"></div>
<div class="a" style="left:0px;top:575px;width:1024px;height:1px;background:#b8b8b8;"></div>
<div class="a" style="left:1.2px;top:565px;width:160px;height:10.5px;background:#eeeeee;border:1px solid #c4c4c4;border-top-color:#9a9a9a;border-left-color:#9a9a9a"></div>
<div class="t" style="left:2.6px;top:570.2px;font-size:6.5px;color:#111;font-weight:normal;">Ready</div>
<div class="a" style="left:162px;top:565px;width:679px;height:10.5px;background:#eeeeee;border:1px solid #c4c4c4;border-top-color:#9a9a9a;border-left-color:#9a9a9a"></div>
<div class="a" style="left:162.8px;top:567.3px;width:676.1px;height:5.4px;background:#0a7af0;"></div>
<div class="a" style="left:162.8px;top:567px;width:676.1px;height:0.6px;background:#8fd0f8;"></div>
<div class="a" style="left:841.5px;top:565px;width:159.5px;height:10.5px;background:#eeeeee;border:1px solid #c4c4c4;border-top-color:#9a9a9a;border-left-color:#9a9a9a"></div>
<div class="t" style="left:842.6px;top:570.1px;font-size:6.6px;color:#111;font-weight:normal;">CurrentTune.msq</div>
<div class="a" style="left:1001.5px;top:565px;width:11.5px;height:10.5px;background:#eeeeee;border:1px solid #c4c4c4;border-top-color:#9a9a9a;border-left-color:#9a9a9a"></div>
<svg class="a" style="left:1000px;top:564px" width="16" height="12" viewBox="1000 564 16 12"><rect x="1003.6" y="568" width="7.6" height="4" fill="#2a2020"/><rect x="1006.6" y="568.8" width="2.4" height="2" fill="#1c8a2c"/><circle cx="1007.3" cy="570" r="3.2" fill="none" stroke="#e8202c" stroke-width="0.8"/><line x1="1005" y1="567.8" x2="1009.6" y2="572.2" stroke="#e8202c" stroke-width="0.7"/></svg>
<div class="a" style="left:0px;top:61px;width:1.6px;height:504px;background:#8aa6d6;"></div>
<div class="a" style="left:1022.5px;top:62px;width:1.5px;height:17px;background:#a8bcd8;"></div>
<div class="a" style="left:1020.4px;top:79px;width:3.6px;height:486px;background:linear-gradient(90deg,#c8ddf2,#a4bad8);"></div>
</body></html>
